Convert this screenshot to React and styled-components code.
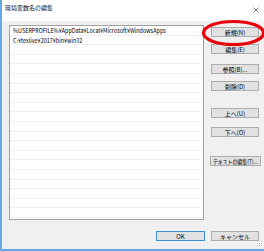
import React from "react";
import styled, { createGlobalStyle } from "styled-components";

const GlobalStyle = createGlobalStyle`
  html, body {
    margin: 0;
    padding: 0;
    background: #fff;
  }
  body {
    font-family: "Noto Sans CJK JP", "Noto Sans", sans-serif;
  }
`;

const Window = styled.div`
  position: relative;
  width: 264px;
  height: 251px;
  box-sizing: border-box;
  border-left: 2px solid #64a9e6;
  border-bottom: 2px solid #64a9e6;
  background: #f0f0f0;
  display: flex;
  flex-direction: column;
  overflow: hidden;
`;

const TitleBar = styled.div`
  height: 21px;
  flex: none;
  background: #fff;
  display: flex;
  align-items: flex-start;
  justify-content: space-between;
  padding: 4px 5px 0 3px;
  box-sizing: border-box;
`;

const Title = styled.span`
  font-size: 6px;
  line-height: 8px;
  color: #111;
`;

const Close = styled.svg`
  margin-top: 3px;
  width: 6px;
  height: 6px;
`;

const Main = styled.div`
  display: flex;
  height: 195px;
  margin-top: 4px;
  padding-left: 7px;
  gap: 7px;
`;

const List = styled.div`
  width: 195px;
  height: 195px;
  box-sizing: border-box;
  border: 1px solid #a0a0a0;
  background: #fff;
  overflow: hidden;
`;

const Row = styled.div`
  height: 9.6px;
  box-sizing: border-box;
  border-bottom: 1px solid #f0f0f0;
  padding-left: 3px;
  font-size: 6px;
  line-height: 9px;
  color: #000;
  white-space: nowrap;
`;

const RowText = styled.span`
  display: inline-block;
  transform: scaleX(0.91);
  transform-origin: left center;
`;

const ButtonColumn = styled.div`
  display: flex;
  flex-direction: column;
  align-items: center;
  width: 48px;
`;

const Button = styled.div`
  margin-top: ${p => p.$mt || 0}px;
  width: ${p => p.$w || 48}px;
  height: 10px;
  box-sizing: border-box;
  border: 1px solid ${p => (p.$primary ? "#3c8fd8" : "#adadad")};
  background: #e1e1e1;
  display: flex;
  align-items: center;
  justify-content: center;
  font-size: 6px;
  color: #000;
  white-space: nowrap;
`;

const Label = styled.span`
  display: inline-block;
  transform: scaleX(${p => p.$squeeze || 1});
`;

const Footer = styled.div`
  display: flex;
  justify-content: flex-end;
  gap: 6px;
  margin-top: 11px;
  padding-right: 5px;
`;

const Highlight = styled.svg`
  position: absolute;
  left: 199px;
  top: 19px;
  width: 65px;
  height: 28px;
`;

const Grip = styled.svg`
  position: absolute;
  right: 2px;
  bottom: 3px;
  width: 5px;
  height: 5px;
`;

const paths = [
  "%USERPROFILE%¥AppData¥Local¥Microsoft¥WindowsApps",
  "C:¥texlive¥2017¥bin¥win32",
];

const rows = Array.from({ length: 21 }, (_, i) => paths[i] || "");

const buttons = [
  { label: "新規(N)", mt: 2 },
  { label: "編集(E)", mt: 7 },
  { label: "参照(B)...", mt: 10 },
  { label: "削除(D)", mt: 7 },
  { label: "上へ(U)", mt: 17 },
  { label: "下へ(O)", mt: 9 },
  { label: "テキストの編集(T)...", mt: 19, w: 51, squeeze: 0.82 },
];

export default function App() {
  return (
    <>
      <GlobalStyle />
      <Window>
        <TitleBar>
          <Title>環境変数名の編集</Title>
          <Close viewBox="0 0 6 6">
            <path d="M0.5 0.5 L5.5 5.5 M5.5 0.5 L0.5 5.5" stroke="#444" strokeWidth="0.7" />
          </Close>
        </TitleBar>
        <Main>
          <List>
            {rows.map((text, i) => (
              <Row key={i}>
                <RowText>{text}</RowText>
              </Row>
            ))}
          </List>
          <ButtonColumn>
            {buttons.map(b => (
              <Button key={b.label} $mt={b.mt} $w={b.w}>
                <Label $squeeze={b.squeeze}>{b.label}</Label>
              </Button>
            ))}
          </ButtonColumn>
        </Main>
        <Footer>
          <Button $primary $w={49}>OK</Button>
          <Button>キャンセル</Button>
        </Footer>
        <Highlight viewBox="0 0 65 28">
          <ellipse cx="32.5" cy="14" rx="30" ry="11.5" fill="none" stroke="#e8000b" strokeWidth="3.2" />
        </Highlight>
        <Grip viewBox="0 0 5 5">
          <rect x="4" y="0" width="1" height="1" fill="#bbb" />
          <rect x="2" y="2" width="1" height="1" fill="#bbb" />
          <rect x="4" y="2" width="1" height="1" fill="#bbb" />
          <rect x="0" y="4" width="1" height="1" fill="#bbb" />
          <rect x="2" y="4" width="1" height="1" fill="#bbb" />
          <rect x="4" y="4" width="1" height="1" fill="#bbb" />
        </Grip>
      </Window>
    </>
  );
}
